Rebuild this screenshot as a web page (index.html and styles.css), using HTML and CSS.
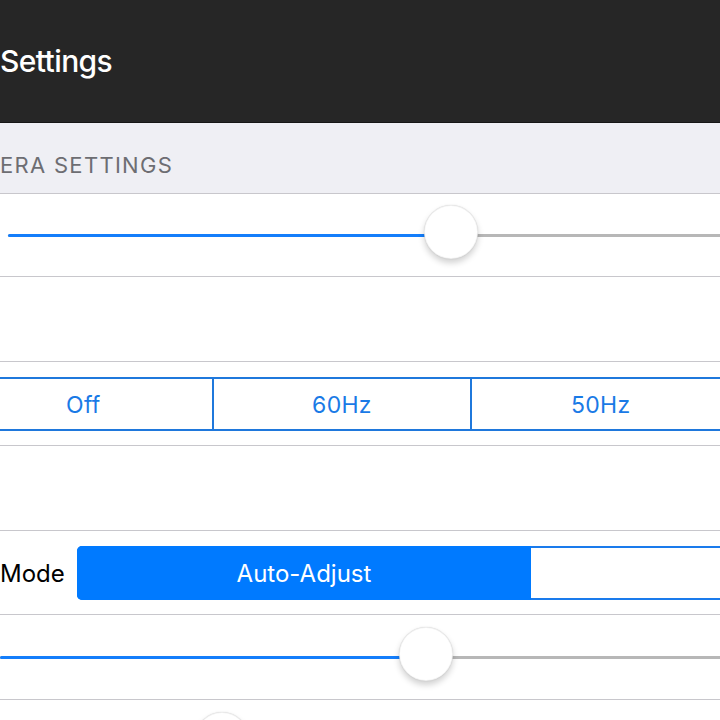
FILE: index.html
```html
<!DOCTYPE html>
<html lang="en">
<head>
    <meta charset="UTF-8">
    <meta name="viewport" content="width=device-width, initial-scale=1.0">
    <title>Camera Settings</title>
    <link rel="stylesheet" href="styles.css">
</head>
<body>
    <div class="screen">
        <div class="navbar">
            <h1 class="nav-title">Settings</h1>
        </div>

        <div class="section-header">ERA SETTINGS</div>

        <div class="table">
            <div class="row first">
                <div class="slider slider-inset">
                    <div class="track">
                        <div class="track-fill" style="width: 443px;"></div>
                    </div>
                    <div class="thumb" style="left: 443px;"></div>
                </div>
            </div>

            <div class="row"></div>

            <div class="row">
                <div class="segmented outline wide">
                    <div class="segment">Off</div>
                    <div class="segment">60Hz</div>
                    <div class="segment">50Hz</div>
                </div>
            </div>

            <div class="row"></div>

            <div class="row">
                <span class="row-label">Mode</span>
                <div class="segmented outline mode">
                    <div class="segment selected">Auto-Adjust</div>
                    <div class="segment"></div>
                </div>
            </div>

            <div class="row">
                <div class="slider">
                    <div class="track">
                        <div class="track-fill" style="width: 426px;"></div>
                    </div>
                    <div class="thumb" style="left: 426px;"></div>
                </div>
            </div>

            <div class="row">
                <div class="slider">
                    <div class="track">
                        <div class="track-fill" style="width: 222px;"></div>
                    </div>
                    <div class="thumb" style="left: 222px;"></div>
                </div>
            </div>
        </div>
    </div>
</body>
</html>
```

FILE: styles.css
```css
html, body {
    margin: 0;
    padding: 0;
    background: #ffffff;
}
body {
    font-family: Inter, "Noto Sans", "DejaVu Sans", sans-serif;
    width: 720px;
    height: 720px;
    overflow: hidden;
}
.screen {
    width: 720px;
    overflow: hidden;
}
.navbar {
    height: 122px;
    background: #262626;
    border-bottom: 1px solid #161616;
    display: flex;
    align-items: center;
}
.nav-title {
    margin: 0;
    color: #ffffff;
    font-size: 30px;
    font-weight: 500;
    letter-spacing: -0.6px;
}
.section-header {
    height: 71px;
    box-sizing: border-box;
    background: #efeff4;
    border-bottom: 1px solid #c8c7cc;
    color: #6d6d72;
    font-size: 22px;
    letter-spacing: 1.3px;
    padding: 29px 0 0 0;
}
.row {
    height: 84.6px;
    box-sizing: border-box;
    border-bottom: 1px solid #c8c7cc;
    display: flex;
    align-items: center;
    background: #ffffff;
}
.row.first {
    height: 83px;
}
.row-label {
    font-size: 24px;
    color: #000000;
    width: 77px;
    flex-shrink: 0;
    padding-top: 2px;
}

/* slider */
.slider {
    position: relative;
    flex: 1;
    height: 54px;
    display: flex;
    align-items: center;
    margin-right: -200px;
}
.slider-inset {
    margin-left: 8px;
}
.track {
    height: 3px;
    flex: 1;
    background: #b7b7b7;
    border-radius: 2px;
    margin-top: 1px;
}
.track-fill {
    height: 3px;
    background: #147efb;
    border-radius: 2px;
}
.thumb {
    position: absolute;
    top: -3px;
    width: 54px;
    height: 54px;
    margin-left: -27px;
    border-radius: 50%;
    background: #ffffff;
    box-sizing: border-box;
    border: 1px solid rgba(0, 0, 0, 0.06);
    box-shadow: 0 4px 6px rgba(0, 0, 0, 0.18), 0 0 1px rgba(0, 0, 0, 0.2);
}

/* segmented control */
.segmented {
    display: flex;
    height: 54px;
    box-sizing: border-box;
    flex-shrink: 0;
}
.segmented.outline {
    border: 2px solid #1f78dc;
    border-radius: 5px;
}
.segmented.wide {
    margin-left: -47px;
    width: 778px;
    margin-top: 2px;
}
.segmented.mode {
    width: 912px;
    border-color: #1a7bec;
}
.segment {
    flex: 1;
    display: flex;
    align-items: center;
    justify-content: center;
    color: #1a7ae6;
    font-size: 23px;
    letter-spacing: 0.3px;
    border-left: 2px solid #1f78dc;
    padding-top: 2px;
}
.segment:first-child {
    border-left: none;
}
.segment.selected {
    flex: 0 0 454px;
    box-sizing: border-box;
    background: #007aff;
    color: #ffffff;
    font-size: 24px;
    letter-spacing: 0;
    margin: -2px 0 -2px -2px;
    border-radius: 5px 0 0 5px;
}
.mode .segment + .segment {
    border-left: none;
}
```
